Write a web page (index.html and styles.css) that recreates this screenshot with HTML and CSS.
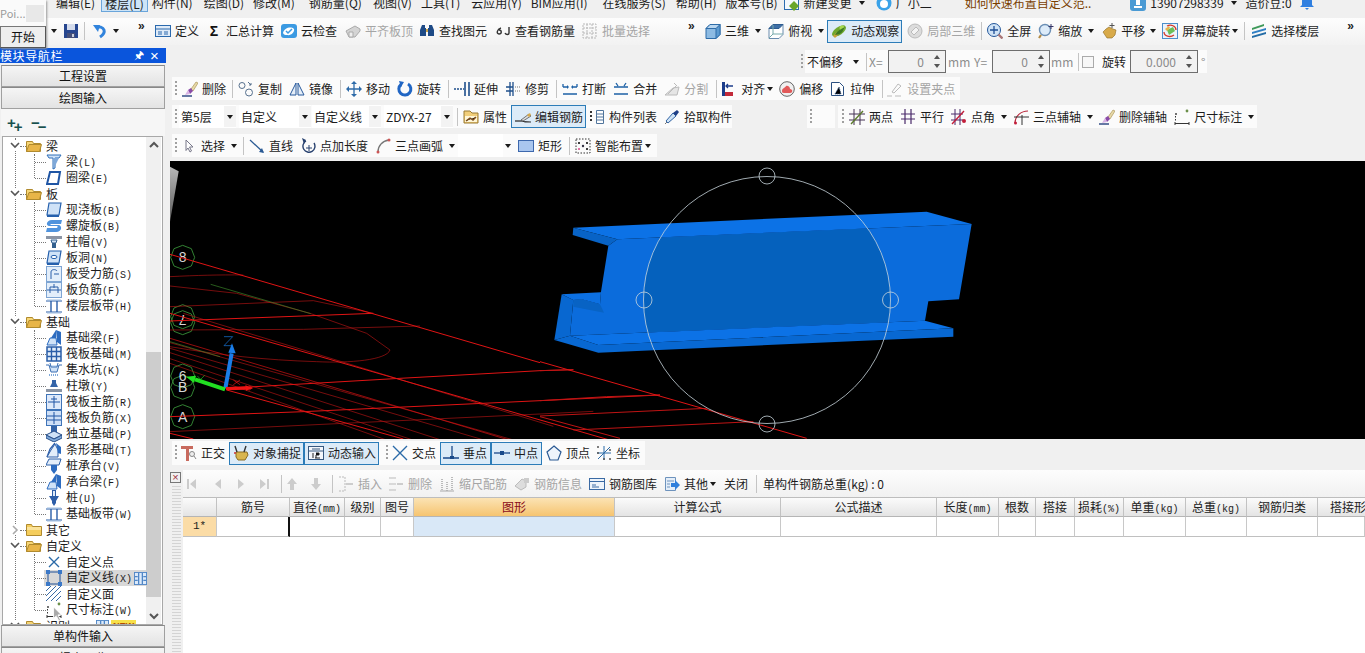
FILE: index.html
```html
<!DOCTYPE html>
<html lang="zh">
<head>
<meta charset="utf-8">
<title>钢筋算量</title>
<link rel="stylesheet" href="styles.css">
</head>
<body>
<svg class="defs" xmlns="http://www.w3.org/2000/svg">
<symbol id="save" viewBox="0 0 16 16"><path fill="#27468f" d="M1 1h14v14H1z"/><path fill="#d5dcec" d="M4 1h8v6H4z"/><path fill="#46507a" d="M4 10h8v5H4z"/><path fill="#c9cfdd" d="M9 11h2v3H9z"/></symbol>
<symbol id="undo" viewBox="0 0 16 16"><path fill="none" stroke="#3183dc" stroke-width="3" d="M4 5c3-2 7-1 8 2s-1 5-4 7"/><path fill="#3183dc" d="M1 2l7 0-2 7z"/></symbol>
<symbol id="def" viewBox="0 0 16 16"><rect x=".5" y="2.5" width="15" height="11" fill="#dfebf8" stroke="#2a69ad"/><path stroke="#2a69ad" d="M1 6h14M3 9h4M3 11h4M9 9h4M9 11h4"/></symbol>
<symbol id="cloudc" viewBox="0 0 16 16"><rect y="1" width="16" height="14" rx="3" fill="#3b9ae2"/><path fill="#fff" d="M2 10c1-5 8-7 11-4 1 3-3 7-7 6-2 0-3 0-4-2z"/><path fill="none" stroke="#3b9ae2" stroke-width="1.5" d="M5 8l2 2 4-4"/></symbol>
<symbol id="flat" viewBox="0 0 16 16"><path fill="#d4d4d4" stroke="#aaa" d="M1 8l9-5 5 3v2l-5 6H4z"/><path fill="#eee" stroke="#aaa" d="M4 9h4v5H4z"/></symbol>
<symbol id="bino" viewBox="0 0 16 16"><path fill="#1e4a86" d="M3 2h3v3h1v8H1V7zM10 2h3l2 5v6H9V5h1z"/><path fill="#c8a24a" d="M7 6h2v3H7z"/></symbol>
<symbol id="hooks" viewBox="0 0 16 16"><path fill="none" stroke="#333" stroke-width="1.4" d="M6 5C2 6 1 11 4 11s3-4 0-4M14 4v6c0 2-3 2-4 0"/></symbol>
<symbol id="batch" viewBox="0 0 16 16"><path fill="none" stroke="#b8b8b8" stroke-dasharray="2 1" d="M1 1h13v14H1zM1 5h13M1 10h13M5 1v14M10 1v14"/></symbol>
<symbol id="cube" viewBox="0 0 16 16"><path fill="#8dbbe3" stroke="#2e6ca8" d="M1 5.500l4-4h10v10l-4 4H1z"/><path fill="#5c9ad0" stroke="#2e6ca8" d="M11 5.500l4-4v10l-4 4z"/><path fill="#b9d6ef" stroke="#2e6ca8" d="M1 5.500l4-4h10l-4 4z"/></symbol>
<symbol id="cubet" viewBox="0 0 16 16"><path fill="#fff" stroke="#6a8cae" d="M1 5.500l4-4h10v10l-4 4H1z"/><path fill="#3e6fa6" stroke="#2e5c90" d="M1 5.500l4-4h10l-4 4z"/><path fill="none" stroke="#7aa" d="M5 2v9l-4 4M5 11h10"/></symbol>
<symbol id="orbit" viewBox="0 0 16 16"><ellipse cx="8" cy="8" rx="8" ry="4" transform="rotate(-35 8 8)" fill="#6fa82e"/><path fill="#c9a23a" d="M2 13l4-4 2 2-4 4z"/><circle cx="11" cy="5" r="2.500" fill="#a6d84e"/><path fill="#3d7a24" d="M4 12c2-4 6-6 10-8-2 5-5 8-10 8z"/></symbol>
<symbol id="local3" viewBox="0 0 16 16"><circle cx="8" cy="8" r="7" fill="#dcdcdc" stroke="#bbb"/><path fill="#f3f3f3" stroke="#bbb" d="M4 9l5-5 3 3-5 5z"/></symbol>
<symbol id="full" viewBox="0 0 16 16"><circle cx="7" cy="7" r="6.500" fill="#cfe3f6" stroke="#23569a"/><path stroke="#1f4f95" stroke-width="1.300" d="M7 3v8M3 7h8"/><path stroke="#a77" stroke-width="2.400" d="M11.500 11.500l4 4"/></symbol>
<symbol id="zoomi" viewBox="0 0 16 16"><circle cx="7" cy="7" r="5.500" fill="#dcebf9" stroke="#6b8fb5" stroke-width="1.400"/><path stroke="#b38b45" stroke-width="2.200" d="M3 12l-2 3"/><path stroke="#336" d="M13 1v5M10.500 3.500h5"/></symbol>
<symbol id="pan" viewBox="0 0 16 16"><path fill="#d8aa4a" stroke="#8b6a22" stroke-width=".6" d="M2 9l3-3 3-2 4 2 3 1-1 5-3 3H6z"/><path stroke="#555" d="M11 0v5M8.500 2.500h5"/></symbol>
<symbol id="screen" viewBox="0 0 16 16"><rect x=".5" y=".5" width="15" height="15" fill="#eaf3fb" stroke="#4b8ecb"/><path fill="#6cbf58" d="M5 7l6-3 2 4-6 4z"/><path fill="#e9b44c" d="M3 6l4-3 1 2-3 3z"/><path fill="none" stroke="#d43a2a" stroke-width="1.300" d="M2 9c0 4 6 6 10 3M14 7c0-4-5-6-9-4"/></symbol>
<symbol id="floors" viewBox="0 0 16 16"><path fill="#3f9a5a" d="M1 5l12-4v2L1 7z"/><path fill="#2f7fc4" d="M1 9l14-4v2L1 11z"/><path fill="#246ca6" d="M1 13l14-4v2L1 15z"/></symbol>
<symbol id="brush" viewBox="0 0 16 16"><path fill="#e7d9a8" stroke="#a38b4a" stroke-width=".6" d="M9 8l5-7 2 1-5 8z"/><path fill="#8a4ba8" d="M6 9l3-2 2 3-3 3z"/><path fill="#d8b3e4" d="M3 14l3-5 2 4z"/><path stroke="#26417f" stroke-width="1.400" d="M0 15h10"/></symbol>
<symbol id="copy" viewBox="0 0 16 16"><g fill="none" stroke="#56708e"><circle cx="4" cy="4.500" r="3"/><circle cx="11" cy="11.500" r="3.500"/><path d="M10 1l3 3M13 2v2h-2"/></g></symbol>
<symbol id="mirror" viewBox="0 0 16 16"><path fill="#e5eef8" stroke="#27589b" d="M7 2v12H1zM9 2v12h6z"/></symbol>
<symbol id="move" viewBox="0 0 16 16"><path fill="none" stroke="#2d6aa8" stroke-width="1.300" d="M8 1v14M1 8h14"/><path fill="#2d6aa8" d="M8 0l3 3H5zM8 16l-3-3h6zM0 8l3-3v6zM16 8l-3 3V5z"/></symbol>
<symbol id="rot" viewBox="0 0 16 16"><path fill="none" stroke="#2166c4" stroke-width="3" d="M11 3a6 6 0 1 1-7 .5"/><path fill="#2166c4" d="M2 0l5 1-3 5z"/></symbol>
<symbol id="extend" viewBox="0 0 16 16"><path stroke="#1e4f8c" stroke-width="1.600" d="M11 1v14M15 1v14"/><path stroke="#1e4f8c" stroke-dasharray="2 1" stroke-width="1.300" d="M0 8h10"/></symbol>
<symbol id="trim" viewBox="0 0 16 16"><path stroke="#1e4f8c" stroke-width="1.300" d="M5 1v14M8 1v14M1 6h7M1 10h7"/><path stroke="#777" stroke-dasharray="1 1" d="M10 6h5M10 10h5"/></symbol>
<symbol id="brk" viewBox="0 0 16 16"><path fill="none" stroke="#1e62a6" stroke-width="1.300" d="M1 6h4M11 6h4M1 13h14M1 3v3M15 3v3"/><path fill="#1e62a6" d="M7 6L5 4v4zM9 6l2-2v4z"/></symbol>
<symbol id="merge" viewBox="0 0 16 16"><path fill="none" stroke="#1e62a6" stroke-width="1.300" d="M1 6h14M1 13h14M3 2l2 3M13 2l-2 3"/></symbol>
<symbol id="split" viewBox="0 0 16 16"><path fill="#e5e5e5" stroke="#bbb" d="M1 14l8-7 6-1-2 8z"/><path stroke="#bbb" d="M10 2l3 3M4 13l8-8"/></symbol>
<symbol id="align" viewBox="0 0 16 16"><path fill="#1c3d8a" d="M1 1h3v14H1z"/><path fill="#c22a3a" d="M4 11h8v4H4z"/><path fill="none" stroke="#1c3d8a" stroke-width="1.300" d="M5 5h7M7 3L5 5l2 2"/></symbol>
<symbol id="offset" viewBox="0 0 16 16"><circle cx="8" cy="8" r="7.300" fill="#f0f0f0" stroke="#666"/><path fill="#e25a5a" d="M3 10c0-3 3-3 4-5 3-1 4 2 4 3 3 0 3 4 0 4H5c-2 0-2-1-2-2z"/></symbol>
<symbol id="stretch" viewBox="0 0 16 16"><path fill="#fff" stroke="#2a4f80" d="M1.500 1.500h8l4 4v9h-12z"/><path stroke="#2a4f80" stroke-dasharray="1 1" d="M5 13l4-7 2 7z"/></symbol>
<symbol id="gridpt" viewBox="0 0 16 16"><path fill="none" stroke="#bbb" d="M0 15h5M8 15h6M5 11l6-8 3 2-7 7z"/></symbol>
<symbol id="props" viewBox="0 0 16 16"><path fill="#f1ce7a" stroke="#9a7a32" d="M1 2h6l2 2h6v10H1z"/><path fill="#fff6d6" d="M2 7h12v6H2z"/><path stroke="#7b4a1a" stroke-width="1.400" d="M3 12l4-3 3 2 3-3"/></symbol>
<symbol id="edit" viewBox="0 0 16 16"><path stroke="#222" stroke-width="1.200" d="M0 12h7"/><path stroke="#333" d="M7 12l3 1h6"/><path fill="#ddd" stroke="#444" stroke-width=".7" d="M6 11l8-6 2 2-8 5z"/><path fill="#d8aa4a" d="M12 6l3-2 1 2-2 2z"/></symbol>
<symbol id="list" viewBox="0 0 16 16"><path fill="#fff" stroke="#51759c" d="M7.500 1.500h7v13h-7z"/><path stroke="#51759c" d="M8 5h6M8 8h6M8 11h6"/><path stroke="#333" stroke-dasharray="2 2" stroke-width="2" d="M2 2v12"/></symbol>
<symbol id="pick" viewBox="0 0 16 16"><path fill="#cfe3f5" stroke="#3264a4" d="M2 12l7-8 3 3-8 7z"/><path fill="#1f3f86" d="M9 4l4-3 2 2-3 4z"/><path stroke="#777" d="M1 15l2-2"/></symbol>
<symbol id="twop" viewBox="0 0 16 16"><path stroke="#443355" d="M0 5h16M0 11h16M5 0v16M11 0v16"/><path stroke="#5a7a2a" stroke-width="1.400" d="M2 15L14 2"/></symbol>
<symbol id="par" viewBox="0 0 16 16"><path stroke="#4a2a6a" stroke-width="1.200" d="M1 5h14M1 10h14M5 0v15M11 0v15"/></symbol>
<symbol id="ang" viewBox="0 0 16 16"><path stroke="#4a2a6a" d="M0 5h12M0 11h12M4 0v16M9 0v16"/><path stroke="#c21e3a" stroke-width="1.400" d="M1 15L13 2"/><circle cx="13" cy="12" r="2" fill="#c21e3a"/></symbol>
<symbol id="tri" viewBox="0 0 16 16"><path fill="none" stroke="#b8263a" stroke-width="1.100" d="M2 14C2 7 8 2 15 2"/><path stroke="#333" d="M1 8h15M9 6v10"/><circle cx="2.500" cy="14" r="1.500" fill="#c21e3a"/></symbol>
<symbol id="dim" viewBox="0 0 16 16"><path stroke="#333" d="M1 13v3M15 13v3M1 14.500h14"/><path stroke="#333" stroke-dasharray="1.500 1.500" d="M1.500 7v5"/><circle cx="13" cy="2" r="1.400" fill="#6b8f4a"/><circle cx="2" cy="5" r="1" fill="#444"/></symbol>
<symbol id="cur" viewBox="0 0 16 16"><path fill="#fff" stroke="#778" d="M5 2l7 7H8.500l2 4-1.500 1-2-4L5 12.500z"/></symbol>
<symbol id="line" viewBox="0 0 16 16"><path stroke="#2a5a94" stroke-width="1.300" d="M1 2l13 12"/><path fill="#2a5a94" d="M15 15l-5-1 3-4z"/></symbol>
<symbol id="circp" viewBox="0 0 16 16"><path fill="none" stroke="#27406e" stroke-width="1.400" d="M6 3a6 6 0 1 0 8 2"/><path stroke="#27406e" d="M9 7v6M6 10h6"/><path fill="#27406e" d="M2 0l4 2-2 4z"/></symbol>
<symbol id="arc" viewBox="0 0 16 16"><path fill="none" stroke="#777" stroke-width="1.400" d="M3 14C3 8 7 3 14 2"/><circle cx="3" cy="14" r="1.500" fill="#c55"/><circle cx="14" cy="2" r="1.500" fill="#c55"/></symbol>
<symbol id="rect" viewBox="0 0 16 16"><rect x=".5" y="2.500" width="15" height="11" fill="#a9c6ef" stroke="#3d68ad"/></symbol>
<symbol id="smart" viewBox="0 0 16 16"><path fill="none" stroke="#333" stroke-dasharray="1.500 1.500" d="M1 1h14v14H1z"/><circle cx="8" cy="8" r="1.200" fill="#334"/><circle cx="4" cy="5" r="1"/><circle cx="12" cy="5" r="1"/><circle cx="4" cy="11" r="1" fill="#d48"/><circle cx="12" cy="11" r="1"/></symbol>
<symbol id="ortho" viewBox="0 0 16 16"><path fill="#c86a5e" d="M0 1h12v3H8v12H5V4H0z"/><circle cx="11" cy="9" r="2.500" fill="#eee" stroke="#888"/><path stroke="#888" d="M13 11l2 3"/></symbol>
<symbol id="magnet" viewBox="0 0 16 16"><path fill="#d8b54e" stroke="#8a6c22" d="M3 7h11l1 3-3 5H5l-2-3z"/><path stroke="#333" stroke-width="1.400" d="M2 1l2 6M13 1l-2 6"/><circle cx="2" cy="8" r="1" fill="#c33"/></symbol>
<symbol id="dyn" viewBox="0 0 16 16"><rect x=".5" y="1.500" width="15" height="13" fill="#f4f7fb" stroke="#36587f"/><path stroke="#36587f" d="M1 6h14M4 4h8"/><path stroke="#222" d="M5 8v5M7 13h5M8 8h3v2H8v3"/></symbol>
<symbol id="cross" viewBox="0 0 16 16"><path stroke="#2a6aa8" stroke-width="1.400" d="M1 1l14 14M15 1L1 15"/></symbol>
<symbol id="perp" viewBox="0 0 16 16"><path stroke="#1a4a8a" stroke-width="1.300" d="M9 1v11M0 13h16"/><rect x="7" y="11" width="4" height="3" fill="#1a4a8a"/></symbol>
<symbol id="mid" viewBox="0 0 16 16"><path stroke="#1a4a8a" stroke-width="1.300" d="M0 8h16"/><rect x="6" y="6" width="4" height="4" fill="#1a4a8a"/></symbol>
<symbol id="pent" viewBox="0 0 16 16"><path fill="#eef4fb" stroke="#2b5a94" stroke-width="1.200" d="M8 1l7 6-3 8H4L1 7z"/></symbol>
<symbol id="coord" viewBox="0 0 16 16"><path stroke="#2a6aa8" d="M8 1v14M1 8h14M2 14l12-12"/><g fill="#555"><circle cx="2" cy="2" r="1"/><circle cx="14" cy="14" r="1"/><circle cx="2" cy="8" r="1"/><circle cx="14" cy="5" r="1"/><circle cx="8" cy="14" r="1"/></g></symbol>
<symbol id="first" viewBox="0 0 16 16"><path fill="#ccc" d="M4 3h2v10H4zM13 3v10L7 8z"/></symbol>
<symbol id="prev" viewBox="0 0 16 16"><path fill="#ccc" d="M11 3v10L5 8z"/></symbol>
<symbol id="next" viewBox="0 0 16 16"><path fill="#ccc" d="M5 3v10l6-5z"/></symbol>
<symbol id="last" viewBox="0 0 16 16"><path fill="#ccc" d="M12 3h-2v10h2zM3 3v10l6-5z"/></symbol>
<symbol id="up" viewBox="0 0 16 16"><path fill="#ccc" d="M8 2l5 6h-3v6H6V8H3z"/></symbol>
<symbol id="down" viewBox="0 0 16 16"><path fill="#ccc" d="M8 14l5-6h-3V2H6v6H3z"/></symbol>
<symbol id="ins" viewBox="0 0 16 16"><path fill="none" stroke="#bbb" stroke-dasharray="2 1" d="M1 1h6v14H1"/><path stroke="#bbb" stroke-width="1.400" d="M8 8h7"/></symbol>
<symbol id="del" viewBox="0 0 16 16"><path fill="none" stroke="#bbb" d="M1 2h7M1 8h7M1 14h7"/><path stroke="#bbb" stroke-width="1.400" d="M9 8h6"/></symbol>
<symbol id="scale" viewBox="0 0 16 16"><path stroke="#bbb" stroke-dasharray="1 1" stroke-width="2" d="M3 3v12M8 6v9M13 1v14"/><path stroke="#aaa" d="M1 15h14"/></symbol>
<symbol id="info" viewBox="0 0 16 16"><path fill="#ddd" stroke="#bbb" d="M1 10l7-7 4 2v6l-5 3z"/><path fill="#ccc" d="M10 2h5v5h-5z"/></symbol>
<symbol id="lib" viewBox="0 0 16 16"><rect x=".5" y="2.500" width="15" height="11" fill="#eef4fb" stroke="#3a6aa4"/><path stroke="#3a6aa4" d="M1 5.500h14M3 9h4M3 11h7"/></symbol>
<symbol id="oth" viewBox="0 0 16 16"><path fill="#e4eef9" stroke="#6e93bd" d="M1.500 1.500h10v13h-10z"/><path stroke="#6e93bd" d="M3 5h7M3 8h3M3 11h3"/><path fill="#2f7fdc" d="M7 7h4V4l5 5-5 5v-3H7z"/></symbol>
<symbol id="ffold" viewBox="0 0 16 16"><path fill="#f7d676" stroke="#b08a2e" d="M.5 3.500h6l1 2h7v8H.5z"/><path fill="#e8b548" stroke="#b08a2e" d="M3 6.500h12.500l-2 7H.5z"/></symbol>
<symbol id="fclosed" viewBox="0 0 16 16"><path fill="#f5cd5c" stroke="#b08a2e" d="M.5 2.500h5l1 2h9v9H.5z"/><path fill="#fbe39a" d="M1 5h14v3H1z"/></symbol>
<symbol id="tbeam" viewBox="0 0 16 16"><path fill="#cfe2f7" stroke="#2f6fb8" d="M1 1h14l-2 3H9v10l-2 1V4H3z"/><path fill="#7fa9da" d="M9 4h4l-4 8z"/></symbol>
<symbol id="tring" viewBox="0 0 16 16"><path fill="#fff" stroke="#1f55a4" stroke-width="2" d="M4 2h10l-2 12H1z"/></symbol>
<symbol id="tslab" viewBox="0 0 16 16"><path fill="#cfe2f7" stroke="#2560ad" stroke-width="1.200" d="M3 1h12l-2 12H1z"/><path fill="#2560ad" d="M1 13h12v2H1z"/></symbol>
<symbol id="tspir" viewBox="0 0 16 16"><path fill="#4f93dd" d="M16 2H6C1 2-1 7 3 8h8c1 0 1 2-1 2H1l-1 4h10c5 0 7-5 3-7H5c-1 0-1-1 1-1h9z"/></symbol>
<symbol id="tcap" viewBox="0 0 16 16"><path fill="#8a94a4" d="M0 2h16v3H0z"/><path fill="#cfe2f7" stroke="#33608f" d="M5 6h6l-1 3H6z"/><path fill="#33608f" d="M6 9h4v5H6z"/></symbol>
<symbol id="thole" viewBox="0 0 16 16"><path fill="#cfe2f7" stroke="#2560ad" stroke-width="1.200" d="M3 1h12l-2 12H1z"/><ellipse cx="8" cy="7" rx="3" ry="1.600" fill="#fff" stroke="#2560ad"/><path fill="#2560ad" d="M1 13h12v2H1z"/></symbol>
<symbol id="tbar" viewBox="0 0 16 16"><rect x=".5" y=".5" width="15" height="15" fill="#e3eefa" stroke="#7ea5d3"/><path fill="none" stroke="#2a5ea8" d="M5 13V6c0-3 5-3 6-1M8 8h5"/></symbol>
<symbol id="tneg" viewBox="0 0 16 16"><rect x=".5" y=".5" width="15" height="15" fill="#e3eefa" stroke="#7ea5d3"/><path fill="none" stroke="#2a5ea8" d="M1 8h14M4 5h8M4 5v6M12 5v6M8 2v4"/></symbol>
<symbol id="tband" viewBox="0 0 16 16"><path stroke="#2a5ea8" d="M0 3h16M0 14h16"/><path stroke="#2a5ea8" stroke-width="1.400" d="M5 3v11M11 3v11"/><path stroke="#9cbce0" d="M1 2h14M1 15h14"/></symbol>
<symbol id="tfb" viewBox="0 0 16 16"><path fill="#2d6cc0" d="M10 0l5 2v13l-4-3z"/><path fill="#cfe2f7" stroke="#2d6cc0" d="M1 15l3-7h6l1 7z"/><path fill="#2d6cc0" d="M5 8l5-8v8z"/></symbol>
<symbol id="traft" viewBox="0 0 16 16"><rect x="1" y="1" width="14" height="14" fill="#e3eefa" stroke="#2a5ea8" stroke-width="1.500"/><path stroke="#2a5ea8" stroke-width="1.400" d="M1 5.500h14M1 10.500h14M5.500 1v14M10.500 1v14"/></symbol>
<symbol id="tsump" viewBox="0 0 16 16"><path fill="#cfe2f7" stroke="#3b6fb3" d="M0 3h3l2 7h6l2-7h3"/><path fill="none" stroke="#3b6fb3" d="M4 1l1 4h6l1-4"/><path stroke="#7fa9da" stroke-dasharray="1 1" stroke-width="2" d="M3 13h10"/></symbol>
<symbol id="tped" viewBox="0 0 16 16"><path fill="#3464a8" d="M6 2h4v3l2 4H4l2-4z"/><path fill="#8a94a4" d="M0 11h16v3H0z"/></symbol>
<symbol id="tmain" viewBox="0 0 16 16"><rect x=".5" y=".5" width="15" height="15" fill="#dfeafa" stroke="#3f74b8"/><path stroke="#1f55a4" d="M8 2v12M2 8h12M5 5h6"/></symbol>
<symbol id="tmneg" viewBox="0 0 16 16"><rect x=".5" y=".5" width="15" height="15" fill="#cfe0f7" stroke="#3f74b8"/><path stroke="#1f55a4" d="M8 2v12M1 6h14M1 10h14"/></symbol>
<symbol id="tiso" viewBox="0 0 16 16"><path fill="#3464a8" d="M5 0h6v7H5z"/><path fill="#cfe2f7" stroke="#284f88" d="M0 9l8-4 8 4-8 4z"/><path fill="#7fa9da" stroke="#284f88" d="M0 9v3l8 4 8-4V9l-8 4z"/></symbol>
<symbol id="tstrip" viewBox="0 0 16 16"><path fill="none" stroke="#2d5ea8" stroke-width="1.300" d="M1 15l3-8 5-6"/><path fill="#e3eefa" stroke="#2d5ea8" d="M1 15h11V8L9 2 5 8z"/><path fill="#2d6cc0" d="M10 1l5 4v7l-3-1z"/></symbol>
<symbol id="tpc" viewBox="0 0 16 16"><path fill="#e3eefa" stroke="#2a5ea8" d="M3 1h12l-2 6H0z"/><path fill="#2d6cc0" d="M5 7h6v5l-3 4-3-4z"/></symbol>
<symbol id="tpile" viewBox="0 0 16 16"><path fill="#2d5ea8" d="M6 0h4v6h3l-3 5v2l-2 3-2-3v-2L3 6h3z"/><path fill="#dce9f8" d="M7 1h2v5H7z"/></symbol>
<symbol id="tpt" viewBox="0 0 16 16"><path stroke="#2a6aa8" stroke-width="1.400" d="M3 3l10 10M13 3L3 13"/></symbol>
<symbol id="tline" viewBox="0 0 16 16"><rect x="2" y="2" width="12" height="12" fill="none" stroke="#1f4f95"/><g fill="#3a78c8"><path d="M0 0h4v4H0zM12 0h4v4h-4zM0 12h4v4H0zM12 12h4v4h-4z"/></g></symbol>
<symbol id="tarea" viewBox="0 0 16 16"><path stroke="#3a6aa4" d="M0 5l5-5M0 10L10 0M0 15L15 0M5 15L15 5M10 15l5-5"/></symbol>
<symbol id="mini" viewBox="0 0 14 14"><rect x=".5" y=".5" width="13" height="13" fill="#dceafa" stroke="#4f86c6"/><path stroke="#4f86c6" stroke-width="1.400" d="M5 1v12M9 1v12M1 5h3M1 9h3M10 5h3M10 9h3"/></symbol>
<symbol id="newdoc" viewBox="0 0 16 16"><rect x=".5" y=".5" width="14" height="14" fill="#f4f8fc" stroke="#2c6cb0"/><path fill="#6aa62a" d="M10 6l5 5-5 5-5-5z"/></symbol>
<symbol id="qq" viewBox="0 0 16 16"><circle cx="8" cy="8" r="7.500" fill="#3aa2e8"/><circle cx="8" cy="9" r="4" fill="#fff"/></symbol>
<symbol id="user" viewBox="0 0 16 16"><rect width="16" height="16" rx="3" fill="#4a9ad4"/><path fill="#fff" d="M4 11h8v2H4zM6 5h4v5H6z"/></symbol>
<symbol id="bell" viewBox="0 0 14 14"><path fill="#2f7fe0" d="M7 0c3 0 5 2 5 5v4l2 2H0l2-2V5c0-3 2-5 5-5zM5 12h4l-2 2z"/></symbol>
</svg>

<div class="popup">
  <div class="pop-top"><span class="pop-name">Poi...</span><span class="pop-thumb"></span></div>
  <div class="pop-start">开始</div>
</div>

<div class="menu"><div class="menu-in">
  <span>编辑(E)</span><span class="on">楼层(L)</span><span>构件(N)</span><span class="m2">绘图(D)</span><span>修改(M)</span><span class="m5">钢筋量(Q)</span><span class="m2">视图(V)</span><span>工具(T)</span><span class="m2">云应用(Y)</span><span>BIM应用(I)</span><span class="m6">在线服务(S)</span><span class="m1">帮助(H)</span><span>版本号(B)</span>
  <span class="mi mn3"><svg class="i"><use href="#newdoc"/></svg>新建变更<i class="car"></i></span>
  <span class="mi m2"><svg class="i"><use href="#qq"/></svg>广小二</span>
  <span class="link m24">如何快速布置自定义范..</span>
  <span class="mi m30"><svg class="i"><use href="#user"/></svg>13907298339<i class="car"></i></span>
  <span>造价豆:0</span>
  <svg class="bell"><use href="#bell"/></svg>
</div></div>

<div class="tb tb-main">
  <i class="car"></i>
  <span class="t m6"><svg class="i"><use href="#save"/></svg></span><i class="sep m5"></i>
  <span class="t m7"><svg class="i"><use href="#undo"/></svg></span><i class="car m5"></i><span class="more m19">»</span>
  <span class="t m9"><svg class="i"><use href="#def"/></svg>定义</span>
  <span class="t m7"><span class="i sig">Σ</span>汇总计算</span>
  <span class="t m7"><svg class="i"><use href="#cloudc"/></svg>云检查</span>
  <span class="t m8 dis"><svg class="i"><use href="#flat"/></svg>平齐板顶</span>
  <span class="t m6"><svg class="i"><use href="#bino"/></svg>查找图元</span>
  <span class="t m8"><svg class="i"><use href="#hooks"/></svg>查看钢筋量</span>
  <span class="t m7 dis"><svg class="i"><use href="#batch"/></svg>批量选择</span>
  <span class="more m38">»</span>
  <span class="t m9"><svg class="i"><use href="#cube"/></svg>三维</span><i class="car m6"></i>
  <span class="t m7"><svg class="i"><use href="#cubet"/></svg>俯视</span><i class="car m6"></i>
  <span class="t act m3"><svg class="i"><use href="#orbit"/></svg>动态观察</span>
  <span class="t m5 dis"><svg class="i"><use href="#local3"/></svg>局部三维</span><i class="sep m6"></i>
  <span class="t m5"><svg class="i"><use href="#full"/></svg>全屏</span>
  <span class="t m7"><svg class="i"><use href="#zoomi"/></svg>缩放</span><i class="car m6"></i>
  <span class="t m7"><svg class="i"><use href="#pan"/></svg>平移</span><i class="car m5"></i>
  <span class="t m6"><svg class="i"><use href="#screen"/></svg>屏幕旋转</span><i class="car m2"></i><i class="sep m6"></i>
  <span class="t m6"><svg class="i"><use href="#floors"/></svg>选择楼层</span>
  <span class="more m28">»</span>
</div>

<div class="body">
  <aside class="side">
    <div class="side-h"><span class="side-t">模块导航栏</span><span class="pin">🖈</span><span class="cl">×</span></div>
    <div class="btn first">工程设置</div>
    <div class="btn">绘图输入</div>
    <div class="exp"><span class="pm">+<sub>+</sub></span><span class="pm pm2">−<sub>−</sub></span></div>
    <div class="tree">
      <div class="list">
        <div class="r"><svg class="ar"><path d="M1 2l4 4 4-4"/></svg><i class="rd"></i><svg class="i"><use href="#ffold"/></svg><span>梁</span></div>
        <div class="kids">
          <div class="k"><svg class="i"><use href="#tbeam"/></svg><span>梁<span class="l">(L)</span></span></div>
          <div class="k last"><svg class="i"><use href="#tring"/></svg><span>圈梁<span class="l">(E)</span></span></div>
        </div>
        <div class="r"><svg class="ar"><path d="M1 2l4 4 4-4"/></svg><i class="rd"></i><svg class="i"><use href="#ffold"/></svg><span>板</span></div>
        <div class="kids">
          <div class="k"><svg class="i"><use href="#tslab"/></svg><span>现浇板<span class="l">(B)</span></span></div>
          <div class="k"><svg class="i"><use href="#tspir"/></svg><span>螺旋板<span class="l">(B)</span></span></div>
          <div class="k"><svg class="i"><use href="#tcap"/></svg><span>柱帽<span class="l">(V)</span></span></div>
          <div class="k"><svg class="i"><use href="#thole"/></svg><span>板洞<span class="l">(N)</span></span></div>
          <div class="k"><svg class="i"><use href="#tbar"/></svg><span>板受力筋<span class="l">(S)</span></span></div>
          <div class="k"><svg class="i"><use href="#tneg"/></svg><span>板负筋<span class="l">(F)</span></span></div>
          <div class="k last"><svg class="i"><use href="#tband"/></svg><span>楼层板带<span class="l">(H)</span></span></div>
        </div>
        <div class="r"><svg class="ar"><path d="M1 2l4 4 4-4"/></svg><i class="rd"></i><svg class="i"><use href="#ffold"/></svg><span>基础</span></div>
        <div class="kids">
          <div class="k"><svg class="i"><use href="#tfb"/></svg><span>基础梁<span class="l">(F)</span></span></div>
          <div class="k"><svg class="i"><use href="#traft"/></svg><span>筏板基础<span class="l">(M)</span></span></div>
          <div class="k"><svg class="i"><use href="#tsump"/></svg><span>集水坑<span class="l">(K)</span></span></div>
          <div class="k"><svg class="i"><use href="#tped"/></svg><span>柱墩<span class="l">(Y)</span></span></div>
          <div class="k"><svg class="i"><use href="#tmain"/></svg><span>筏板主筋<span class="l">(R)</span></span></div>
          <div class="k"><svg class="i"><use href="#tmneg"/></svg><span>筏板负筋<span class="l">(X)</span></span></div>
          <div class="k"><svg class="i"><use href="#tiso"/></svg><span>独立基础<span class="l">(P)</span></span></div>
          <div class="k"><svg class="i"><use href="#tstrip"/></svg><span>条形基础<span class="l">(T)</span></span></div>
          <div class="k"><svg class="i"><use href="#tpc"/></svg><span>桩承台<span class="l">(V)</span></span></div>
          <div class="k"><svg class="i"><use href="#tfb"/></svg><span>承台梁<span class="l">(F)</span></span></div>
          <div class="k"><svg class="i"><use href="#tpile"/></svg><span>桩<span class="l">(U)</span></span></div>
          <div class="k last"><svg class="i"><use href="#tband"/></svg><span>基础板带<span class="l">(W)</span></span></div>
        </div>
        <div class="r"><svg class="ar arc"><path d="M3 1l4 4-4 4"/></svg><i class="rd"></i><svg class="i"><use href="#fclosed"/></svg><span>其它</span></div>
        <div class="r"><svg class="ar"><path d="M1 2l4 4 4-4"/></svg><i class="rd"></i><svg class="i"><use href="#ffold"/></svg><span>自定义</span></div>
        <div class="kids">
          <div class="k"><svg class="i"><use href="#tpt"/></svg><span>自定义点</span></div>
          <div class="k sel"><svg class="i"><use href="#tline"/></svg><span>自定义线<span class="l">(X)</span></span><svg class="mini"><use href="#mini"/></svg></div>
          <div class="k"><svg class="i"><use href="#tarea"/></svg><span>自定义面</span></div>
          <div class="k last"><svg class="i"><use href="#dim"/></svg><span>尺寸标注<span class="l">(W)</span></span><svg class="mouse" viewBox="0 0 12 18"><path fill="#aaa" stroke="#fff" d="M1 1l9 9H6l3 6-2 1-3-6-3 3z"/></svg></div>
        </div>
        <div class="r"><svg class="ar"><path d="M1 2l4 4 4-4"/></svg><i class="rd"></i><svg class="i"><use href="#ffold"/></svg><span class="sh">识别</span><svg class="mini"><use href="#mini"/></svg><span class="new">NEW</span></div>
      </div>
      <div class="sb">
        <svg class="sb-b"><path d="M4 10l4-4 4 4"/></svg>
        <div class="sb-s"></div>
        <div class="sb-th"></div>
        <div class="sb-s2"></div>
        <svg class="sb-b"><path d="M4 6l4 4 4-4"/></svg>
      </div>
    </div>
    <div class="btn">单构件输入</div>
    <div class="btn">报表预览</div>
  </aside>

  <main class="right">
    <div class="tb ra">
      <i class="grip m3"></i>
      <span class="t m4">不偏移</span><i class="car m10"></i><i class="sep m7"></i>
      <span class="lab gray m2">X=</span>
      <span class="spin m1"><span>0</span><i class="sp"><i class="au"></i><i class="ad"></i></i></span>
      <span class="lab2 gray m2">mm</span><span class="lab gray m1">Y=</span>
      <span class="spin"><span>0</span><i class="sp"><i class="au"></i><i class="ad"></i></i></span>
      <span class="lab2 gray m1">mm</span><i class="sep m2"></i>
      <i class="chk m3"></i><span class="t m8">旋转</span>
      <span class="spin wide m4"><span>0.000</span><i class="sp"><i class="au"></i><i class="ad"></i></i></span>
      <span class="lab gray m3">°</span>
    </div>

    <div class="tb rb">
      <i class="grip m3"></i>
      <span class="t m5"><svg class="i"><use href="#brush"/></svg>删除</span><i class="sep m6"></i>
      <span class="t m5"><svg class="i"><use href="#copy"/></svg>复制</span>
      <span class="t m7"><svg class="i"><use href="#mirror"/></svg>镜像</span><i class="sep m7"></i>
      <span class="t m5"><svg class="i"><use href="#move"/></svg>移动</span>
      <span class="t m7"><svg class="i"><use href="#rot"/></svg>旋转</span><i class="sep m7"></i>
      <span class="t m5"><svg class="i"><use href="#extend"/></svg>延伸</span>
      <span class="t m7"><svg class="i"><use href="#trim"/></svg>修剪</span><i class="sep m7"></i>
      <span class="t m5"><svg class="i"><use href="#brk"/></svg>打断</span>
      <span class="t m7"><svg class="i"><use href="#merge"/></svg>合并</span>
      <span class="t m7 dis"><svg class="i"><use href="#split"/></svg>分割</span><i class="sep m8"></i>
      <span class="t m4"><svg class="i"><use href="#align"/></svg>对齐</span><i class="car m2"></i>
      <span class="t m6"><svg class="i"><use href="#offset"/></svg>偏移</span>
      <span class="t m7"><svg class="i"><use href="#stretch"/></svg>拉伸</span><i class="sep m8"></i>
      <span class="t m4 dis"><svg class="i"><use href="#gridpt"/></svg>设置夹点</span>
    </div>

    <div class="rc">
      <div class="tb seg">
        <i class="grip m3"></i>
        <span class="combo c57 m2"><span>第5层</span><i class="cb"><i class="car"></i></i></span>
        <span class="combo c72 m3"><span>自定义</span><i class="cb"><i class="car"></i></i></span>
        <span class="combo c69 m1"><span>自定义线</span><i class="cb"><i class="car"></i></i></span>
        <span class="combo c69 m3"><span>ZDYX-27</span><i class="cb"><i class="car"></i></i></span>
        <i class="sep m4"></i>
        <span class="t m5"><svg class="i"><use href="#props"/></svg>属性</span>
        <span class="t act m4"><svg class="i"><use href="#edit"/></svg>编辑钢筋</span>
        <span class="t m3"><svg class="i"><use href="#list"/></svg>构件列表</span>
        <span class="t m7"><svg class="i"><use href="#pick"/></svg>拾取构件</span>
      </div>
      <div class="tb seg blank m75"><i class="grip m3"></i></div>
      <div class="tb seg seg3 m3">
        <i class="grip m4"></i>
        <span class="t m5"><svg class="i"><use href="#twop"/></svg>两点</span>
        <span class="t m7"><svg class="i"><use href="#par"/></svg>平行</span>
        <span class="t m7"><svg class="i"><use href="#ang"/></svg>点角</span><i class="car m6"></i>
        <span class="t m6"><svg class="i"><use href="#tri"/></svg>三点辅轴</span><i class="car m6"></i>
        <span class="t m6"><svg class="i"><use href="#brush"/></svg>删除辅轴</span>
        <span class="t m7"><svg class="i"><use href="#dim"/></svg>尺寸标注</span><i class="car m6"></i>
      </div>
    </div>

    <div class="tb rd2">
      <i class="grip m3"></i>
      <span class="t m4"><svg class="i"><use href="#cur"/></svg>选择</span><i class="car m6"></i><i class="sep m6"></i>
      <span class="t m5"><svg class="i"><use href="#line"/></svg>直线</span>
      <span class="t m7"><svg class="i"><use href="#circp"/></svg>点加长度</span>
      <span class="t m7"><svg class="i"><use href="#arc"/></svg>三点画弧</span><i class="car m6"></i>
      <span class="blankc m3"></span><i class="car m2"></i>
      <span class="t m7"><svg class="i"><use href="#rect"/></svg>矩形</span><i class="sep m7"></i>
      <span class="t m5"><svg class="i"><use href="#smart"/></svg>智能布置</span><i class="car m2"></i>
    </div>

    <svg class="canvas" viewBox="170 161 1195 278" xmlns="http://www.w3.org/2000/svg">
      <defs>
        <clipPath id="disc"><circle cx="681" cy="420" r="370.500"/></clipPath>
        <linearGradient id="gr" x1="0" y1="0" x2="0" y2="1"><stop offset="0" stop-color="#b8b8b8"/><stop offset="1" stop-color="#5a5a5a"/></linearGradient>
      </defs>
      <g transform="translate(170 160) scale(.33333)">
        <path fill="url(#gr)" d="M0 20l26 14L0 185z"/>
        <g fill="none" stroke="#3c9a3c" stroke-width="2.500">
          <path d="M38 256l26 10 10 26-10 26-26 10-26-10-10-26 10-26z"/>
          <path d="M38 434l26 10 10 26-10 26-26 10-26-10-10-26 10-26z"/>
          <path d="M38 452l26 10 10 26-10 26-26 10-26-10-10-26 10-26z"/>
          <path d="M38 612l26 10 10 26-10 26-26 10-26-10-10-26 10-26z"/>
          <path d="M38 646l26 10 10 26-10 26-26 10-26-10-10-26 10-26z"/>
          <path d="M38 734l26 10 10 26-10 26-26 10-26-10-10-26 10-26z"/>
        </g>
        <g class="gridtx">
          <text x="38" y="307">8</text>
          <text transform="rotate(180 38 478)" x="38" y="492">7</text>
          <text x="38" y="662">6</text>
          <text x="38" y="697">B</text>
          <text x="38" y="785">A</text>
        </g>
        <g fill="none" stroke="#b01414" stroke-width="2">
          <path d="M0 350c80-4 150-6 220-5"/>
          <path d="M0 378l200 22 220 60 170 60 70 50c-10 30-120 40-220 35-160-5-290-20-440-45"/>
          <path d="M0 440l240-10 190-8 180 38"/>
          <path d="M0 510l400-2 350-10"/>
          <path d="M0 548l1200 340"/><path d="M0 565l1000 292"/><path d="M0 578l900 290"/><path d="M0 596l800 268"/><path d="M0 610l700 248"/><path d="M40 460l1110 339"/>
          <path d="M0 815l520-25 590-28 160-8"/>
        </g>
        <g fill="none" stroke="#e01414" stroke-width="3">
          <path d="M0 283l1110 325"/>
          <path d="M0 483l610-23"/>
          <path d="M0 460l1350 389"/>
          <path d="M170 685l520-30 420-23 100-3"/>
          <path d="M0 770l400-15 710-33 360-17"/>
          <path d="M170 690l530 147"/>
          <path d="M0 820l70 17"/>
          <path d="M0 535l1100 330" stroke-width="2"/>
        </g>
        <g fill="none" stroke="#3c8a2a" stroke-width="2"><path d="M122 373l300 88"/><path d="M0 545l150 45"/></g>
        <path stroke="#1a7de8" stroke-width="12" d="M166 685l19-105"/><path fill="#1a7de8" d="M186 550l11 30-22-2z"/>
        <path fill="none" stroke="#1a7de8" stroke-width="2" d="M162 530h26l-26 27h26"/>
        <path stroke="#22e022" stroke-width="12" d="M165 688l-90-30"/><path fill="#22e022" d="M48 650l30-3-6 22z"/>
        <path fill="none" stroke="#22c022" stroke-width="2" d="M82 648l10 10 12-12M92 658l-4 8"/>
        <path stroke="#ef1414" stroke-width="10" d="M168 686l60-2"/><path fill="#ef1414" d="M250 684l-24-8 2 16z"/>
        <path fill="none" stroke="#ef1414" stroke-width="2" d="M190 660l20 14M210 660l-20 14M236 676l10 8-10 8"/>
      </g>
      <g transform="translate(540 160) scale(.33333)">
        <g fill="none" stroke-width="3" stroke="#c01414">
          <path d="M0 632l100-3M0 722l200-12 160-5M0 768l500-23M100 810l540-25M0 770l240 65"/>
        </g>
        <path stroke="#e01414" stroke-width="3" d="M0 605l800 230"/>
        <path class="web" d="M232 238L1295 192 1257 418 1165 424 1155 482 90 527 100 420 125 418 180 433 183 395 205 257Z"/>
        <path class="web-dark" clip-path="url(#disc)" d="M232 238L1295 192 1257 418 1165 424 1155 482 90 527 100 420 125 418 180 433 183 395 205 257Z"/>
        <path fill="#0863c4" d="M125 418L180 433 192 458 100 440 100 420Z"/>
        <path fill="#0c72e6" d="M100 203L1160 155 1295 192 232 238Z"/>
        <path fill="#0863c6" d="M100 203L98 225 205 257 232 238Z"/>
        <path fill="#0867d0" d="M65 403L100 420 90 527 43 540Z"/>
        <path fill="#0c70e2" d="M65 403L183 397 180 433 125 418 100 420Z"/>
        <path fill="#0c72e6" d="M90 527L1155 482 1240 505 175 555Z"/>
        <path fill="#0868d2" d="M43 540L90 527 175 555 1240 505 1240 530 175 578Z"/>
      </g>
      <g class="snap">
        <circle cx="767" cy="300" r="123.500"/>
        <circle cx="767" cy="176" r="8"/>
        <circle cx="644" cy="300" r="8"/>
        <circle cx="890.500" cy="300" r="8"/>
        <circle cx="767" cy="424" r="8"/>
      </g>
    </svg>

    <div class="tb re">
      <i class="grip m3"></i>
      <span class="t m4"><svg class="i"><use href="#ortho"/></svg>正交</span>
      <span class="t act m4"><svg class="i"><use href="#magnet"/></svg>对象捕捉</span>
      <span class="t act"><svg class="i"><use href="#dyn"/></svg>动态输入</span>
      <i class="grip m7"></i>
      <span class="t m4"><svg class="i"><use href="#cross"/></svg>交点</span>
      <span class="t act tight m4"><svg class="i"><use href="#perp"/></svg>垂点</span>
      <span class="t act tight"><svg class="i"><use href="#mid"/></svg>中点</span>
      <span class="t m4"><svg class="i"><use href="#pent"/></svg>顶点</span>
      <span class="t m6"><svg class="i"><use href="#coord"/></svg>坐标</span>
    </div>

    <div class="bottom">
      <div class="strip"><span class="xbox">×</span></div>
      <div class="panel">
        <div class="tf">
          <svg class="i dis"><use href="#first"/></svg>
          <svg class="i m11"><use href="#prev"/></svg>
          <svg class="i m7"><use href="#next"/></svg>
          <svg class="i m8"><use href="#last"/></svg>
          <i class="sep m8"></i>
          <svg class="i m2"><use href="#up"/></svg>
          <svg class="i m8"><use href="#down"/></svg>
          <i class="sep m8"></i>
          <span class="t m5 dis"><svg class="i"><use href="#ins"/></svg>插入</span>
          <span class="t m6 dis"><svg class="i"><use href="#del"/></svg>删除</span>
          <span class="t m7 dis"><svg class="i"><use href="#scale"/></svg>缩尺配筋</span>
          <span class="t m7 dis"><svg class="i"><use href="#info"/></svg>钢筋信息</span>
          <span class="t m7"><svg class="i"><use href="#lib"/></svg>钢筋图库</span>
          <span class="t m7"><svg class="i"><use href="#oth"/></svg>其他</span><i class="car m2"></i>
          <span class="t m8">关闭</span><i class="sep m8"></i>
          <span class="t m6">单构件钢筋总重(kg) : 0</span>
        </div>
        <div class="grid">
          <div class="h"></div><div class="h">筋号</div><div class="h">直径<span class="l">(mm)</span></div><div class="h">级别</div><div class="h">图号</div><div class="h hs">图形</div><div class="h">计算公式</div><div class="h">公式描述</div><div class="h">长度<span class="l">(mm)</span></div><div class="h">根数</div><div class="h">搭接</div><div class="h">损耗<span class="l">(%)</span></div><div class="h">单重<span class="l">(kg)</span></div><div class="h">总重<span class="l">(kg)</span></div><div class="h">钢筋归类</div><div class="h hl">搭接形式</div>
          <div class="c cn">1*</div><div class="c cur"></div><div class="c"></div><div class="c"></div><div class="c"></div><div class="c cs"></div><div class="c"></div><div class="c"></div><div class="c"></div><div class="c"></div><div class="c"></div><div class="c"></div><div class="c"></div><div class="c"></div><div class="c"></div><div class="c"></div>
        </div>
      </div>
    </div>
  </main>
</div>
</body>
</html>
```

FILE: styles.css
```css
* { box-sizing: border-box; }
html, body { margin: 0; padding: 0; height: 100%; overflow: hidden; }
body {
  width: 1365px; height: 653px; position: relative; overflow: hidden;
  background: #f0f0f0; color: #1c1c1c;
  font: 12px/16px "Noto Sans CJK SC", "Liberation Sans", sans-serif;
}
i { font-style: normal; display: block; flex: none; }
.defs { display: none; }

.m1 { margin-left: 1px; } .m2 { margin-left: 2px; } .m3 { margin-left: 3px; } .m4 { margin-left: 4px; }
.m5 { margin-left: 5px; } .m6 { margin-left: 6px; } .m7 { margin-left: 7px; } .m8 { margin-left: 8px; }
.m9 { margin-left: 9px; } .m10 { margin-left: 10px; } .m11 { margin-left: 11px; } .m19 { margin-left: 19px; }
.m24 { margin-left: 24px; } .m28 { margin-left: 28px; } .m30 { margin-left: 30px; } .m38 { margin-left: 38px; } .m75 { margin-left: 75px; }
.mn3 { margin-left: -3px; }

/* popup over the top-left corner */
.popup { position: absolute; left: 0; top: 0; width: 46px; height: 48px; z-index: 5; background: #fff; box-shadow: 1px 1px 2px #999; }
.pop-top { height: 26px; display: flex; align-items: center; justify-content: space-between; padding: 0 2px 0 0; background: #fafafa; }
.pop-name { color: #9a9a9a; font-size: 11px; }
.pop-thumb { width: 18px; height: 17px; background: #e8e8e8; }
.pop-start { height: 22px; line-height: 20px; text-align: center; background: #eee; border: 1px solid #777; border-right-color: #555; border-bottom-color: #555; color: #111; }

/* menu */
.menu { height: 18px; overflow: hidden; }
.menu-in { display: flex; align-items: center; gap: 9px; height: 18px; margin-top: -6px; padding-left: 56px; white-space: nowrap; }
.menu .on { padding: 0 3px; height: 18px; line-height: 18px; margin: 0 -5px 0 -3px; background: #cde4f7; border: 1px solid #6aa5da; }
.mi { display: flex; align-items: center; gap: 4px; }
.mi .car { margin-left: 3px; }
.link { color: #7a3e00; }
.bell { width: 14px; height: 14px; margin-left: -1px; }

/* toolbars */
.tb { display: flex; align-items: center; white-space: nowrap; }
.t { display: flex; align-items: center; gap: 4px; flex: none; }
.i { width: 16px; height: 16px; flex: none; display: block; }
.sig { font: bold 14px/16px "Liberation Sans", sans-serif; text-align: center; color: #111; }
.dis { color: #a5a5a5; }
.car { width: 0; height: 0; border-left: 3.500px solid transparent; border-right: 3.500px solid transparent; border-top: 4px solid #1a1a1a; flex: none; }
.sep { width: 1px; height: 18px; background: #c4c4c4; flex: none; }
.grip { width: 2px; height: 16px; flex: none; background: repeating-linear-gradient(to bottom, #a0a0a0 0 2px, transparent 2px 4px); }
.more { width: 8px; font: bold 12px/10px "Liberation Sans", sans-serif; color: #222; transform: translateY(-5px); }
.act { height: 23px; padding: 0 1px 0 3px; width: 75px; background: #dcebf8; border: 1px solid #2c7cb8; }
.tight { width: 51px; padding: 0 2px; }

.tb-main { height: 27px; padding: 0 0 1px 51px; background: linear-gradient(#fdfdfd, #f2f2f2); }

.body { display: flex; height: 608px; }
.right { width: 1195px; margin-left: 4px; flex: none; display: flex; flex-direction: column; }

.ra { height: 23px; margin: 5px 0 0 628px; width: 409px; padding-right: 3px; background: linear-gradient(to right, #f0f0f0 0 7px, #fbfbfb 7px); }
.rb { height: 23px; margin: 4px 0 0 2px; width: 788px; background: #fbfbfb; }
.rc { display: flex; height: 23px; margin: 5px 0 0 2px; }
.seg { height: 23px; background: #fbfbfb; }
.blank { width: 28px; }
.seg3 { padding-right: 3px; }
.rd2 { height: 23px; margin: 6px 0 0 2px; width: 485px; background: #fbfbfb; }
.canvas { display: block; width: 1195px; height: 278px; margin-top: 4px; background: #000; flex: none; }
.re { height: 24px; margin: 2px 0 0 2px; width: 473px; background: #fbfbfb; }

.lab { width: 18px; text-align: left; flex: none; }
.lab2 { width: 25px; flex: none; }
.gray { color: #8d8d8d; }
.spin { display: flex; align-items: center; justify-content: flex-end; width: 58px; height: 23px; background: #f2f2f2; border: 1px solid #6e6e6e; color: #8a8a8a; flex: none; }
.spin.wide { width: 68px; }
.spin > span { margin-right: 5px; }
.sp { width: 16px; height: 21px; display: flex; flex-direction: column; justify-content: center; align-items: center; gap: 5px; }
.au { border-left: 3px solid transparent; border-right: 3px solid transparent; border-bottom: 4px solid #555; }
.ad { border-left: 3px solid transparent; border-right: 3px solid transparent; border-top: 4px solid #555; }
.chk { width: 12px; height: 12px; border: 1px solid #aaa; background: #f7f7f7; }

.combo { display: flex; align-items: center; justify-content: space-between; height: 23px; padding-left: 2px; background: #fff; flex: none; }
.c57 { width: 57px; } .c72 { width: 72px; } .c69 { width: 69px; }
.cb { width: 12px; height: 21px; background: #f3f3f3; display: flex; align-items: center; justify-content: center; }
.blankc { width: 45px; height: 23px; background: #fff; }

/* side */
.side { width: 166px; margin-top: 3px; flex: none; display: flex; flex-direction: column; }
.side-h { height: 15px; flex: none; display: flex; align-items: center; background: #0a55dc; color: #fff; letter-spacing: .6px; }
.side-t { width: 134px; line-height: 15px; }
.pin { width: 16px; font: 11px/15px "DejaVu Sans", sans-serif; letter-spacing: 0; }
.cl { width: 14px; font: 15px/15px "Liberation Sans", sans-serif; letter-spacing: 0; }
.btn { height: 22px; flex: none; width: 164px; margin-left: 1px; line-height: 20px; text-align: center; background: linear-gradient(#f5f5f5, #e3e3e3); border: 1px solid #a0a0a0; border-top-color: #888; color: #111; }
.first { margin-top: 2px; }
.exp { height: 27px; flex: none; display: flex; align-items: center; padding-left: 6px; background: #f6f6f6; width: 164px; margin-left: 1px; }
.pm { width: 24px; color: #17504e; font: bold 15px/14px "Liberation Sans", sans-serif; }
.pm sub { font-size: 15px; line-height: 0; vertical-align: -4px; margin-left: -2px; }
.pm2 { margin-left: 0; }
.tree { display: flex; width: 161px; height: 489px; margin-left: 2px; flex: none; border: 1px solid #a8a8a8; background: #fff; overflow: hidden; }
.list { flex: 1; min-width: 0; margin: 1px 0 0 12px; border-left: 1px dotted #777; }
.r { display: flex; align-items: center; height: 16px; margin-left: -6px; gap: 0; }
.r > .i { margin-right: 4px; }
.ar { width: 10px; height: 10px; flex: none; background: #fff; fill: none; stroke: #555; stroke-width: 1.600; }
.arc { stroke: #aaa; }
.rd { width: 6px; border-top: 1px dotted #777; }
.kids { margin-left: 18px; border-left: 1px dotted #777; }
.k { display: flex; align-items: center; gap: 4px; height: 16px; position: relative; white-space: nowrap; }
.k::before { content: ""; width: 11px; margin-right: -4px; border-top: 1px dotted #777; flex: none; }
.k.last::after { content: ""; position: absolute; left: -1px; top: 9px; width: 1px; height: 8px; background: #fff; }
.k.sel { background: linear-gradient(to right, transparent 9px, #d8d8d8 9px); }
.l { font: 10px/16px "Liberation Mono", monospace; }
.mini { width: 13px; height: 13px; margin-left: -2px; flex: none; }
.mouse { position: absolute; left: 17px; top: 4px; width: 12px; height: 16px; }
.sh { width: 52px; }
.new { background: #f7e04a; color: #b34a00; font: bold 9px/12px "Liberation Sans", sans-serif; padding: 0 2px; margin-left: 2px; }
.sb { width: 15px; flex: none; margin-right: 1px; display: flex; flex-direction: column; background: #f0f0f0; }
.sb-b { width: 15px; height: 16px; flex: none; fill: none; stroke: #555; stroke-width: 2; }
.sb-s { height: 199px; flex: none; }
.sb-th { height: 245px; flex: none; background: #cdcdcd; }
.sb-s2 { flex: 1; }

/* canvas text */
.gridtx text { fill: #d8d8d8; font: 42px "Liberation Sans", sans-serif; text-anchor: middle; }
.web { fill: #0b6cdc; }
.web-dark { fill: #0561bd; }
.snap circle { fill: none; stroke: #c8d4dc; stroke-width: .8; }

/* bottom */
.bottom { display: flex; margin-top: 5px; flex: 1; min-height: 0; }
.strip { width: 13px; flex: none; background: repeating-linear-gradient(to bottom, #d4d4d4 0 1px, transparent 1px 3px) 2px 16px / 9px 100% no-repeat; }
.xbox { display: block; width: 11px; height: 11px; margin-top: 2px; border: 1px solid #777; font: 11px/8px "Liberation Sans", sans-serif; text-align: center; color: #a03040; background: #f0f0f0; }
.panel { flex: 1; min-width: 0; background: #fff; overflow: hidden; }
.tf { display: flex; align-items: center; height: 27px; background: linear-gradient(#fdfdfd, #f1f1f1); white-space: nowrap; }
.grid { display: grid; grid-template-columns: 34px 73px 55px 36px 33px 201px 166px 156px 62px 37px 39px 49px 62px 61px 71px 47px; grid-template-rows: 20px 20px; }
.h { background: linear-gradient(#fbfbfb, #e4e4e4); border-right: 1px solid #c2c2c2; border-bottom: 1px solid #b5b5b5; border-top: 1px solid #bdbdbd; line-height: 18px; text-align: center; white-space: nowrap; overflow: hidden; color: #222; }
.hs { background: linear-gradient(#fbe3b4, #f6c470); color: #8a0b1a; }
.hl { text-align: left; padding-left: 12px; border-right: 0; }
.c { border-right: 1px solid #c8c8c8; border-bottom: 1px solid #c0c0c0; background: #fff; }
.cn { background: #fbdca6; text-align: center; font: 11px/19px "Liberation Mono", monospace; }
.cur { border-right: 2px solid #111; }
.cs { background: #d9e8f7; }
```
